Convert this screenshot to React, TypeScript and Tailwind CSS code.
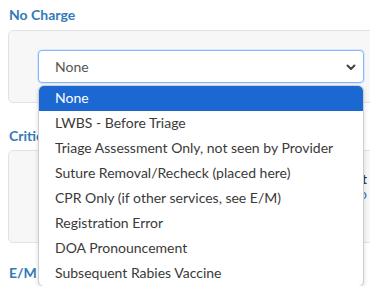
import React from "react";

const options = [
  "None",
  "LWBS - Before Triage",
  "Triage Assessment Only, not seen by Provider",
  "Suture Removal/Recheck (placed here)",
  "CPR Only (if other services, see E/M)",
  "Registration Error",
  "DOA Pronouncement",
  "Subsequent Rabies Vaccine",
];

export default function App() {
  return (
    <div
      className="relative w-[370px] h-[286px] overflow-hidden bg-white"
      style={{ fontFamily: "Lato, 'Open Sans', sans-serif" }}
    >
      <div className="flex flex-col">
        <div className="pl-[9px] pt-[3px] h-[30px] text-[14px] font-bold text-[#3479b9] leading-[24px]">
          No Charge
        </div>
        <div className="ml-[8px] mr-[-20px] h-[73px] rounded-[5px] border border-[#e2e2e2] bg-[#f7f7f7] pt-[19px] pl-[29px]">
          <div className="w-[326px] h-[33px] rounded-[4px] border border-[#86b7fe] bg-white flex items-center justify-between pl-[16px] pr-[7px] shadow-[0_0_0_1px_rgba(134,183,254,0.25)]">
            <span className="text-[14px] text-[#555555]">None</span>
            <svg width="10" height="8" viewBox="0 0 10 8" fill="none">
              <path d="M1.5 2.5 L5 6 L8.5 2.5" stroke="#444" strokeWidth="2" strokeLinecap="round" strokeLinejoin="round" />
            </svg>
          </div>
        </div>
        <div className="pl-[9px] h-[47px] flex items-center pt-[17px] text-[14px] font-bold text-[#3479b9]">
          Critical Care
        </div>
        <div className="ml-[8px] mr-[-20px] h-[93px] rounded-[5px] border border-[#e2e2e2] bg-[#f7f7f7] flex flex-col items-end pr-[22px] pt-[20px] leading-[15px]">
          <span className="text-[14px] font-bold text-[#333]">Start</span>
          <span className="text-[14px] text-[#3479b9]">Info</span>
        </div>
        <div className="pl-[9px] pt-[20px] text-[14px] font-bold text-[#3479b9] leading-[20px]">
          E/M
        </div>
      </div>

      <div className="absolute left-[38px] top-[85px] w-[326px] rounded-[6px] bg-white border border-[#cfcfcf] shadow-[0_2px_4px_rgba(0,0,0,0.15)] overflow-hidden">
        {options.map((o, i) => (
          <div
            key={o}
            className={
              i === 0
                ? "h-[25px] flex items-center pl-[16px] pb-[3px] text-[14px] bg-[#1b68d3] text-white"
                : "h-[25px] flex items-center pl-[16px] pb-[2px] text-[14px] text-[#3a3a3a]"
            }
          >
            {o}
          </div>
        ))}
      </div>
    </div>
  );
}
